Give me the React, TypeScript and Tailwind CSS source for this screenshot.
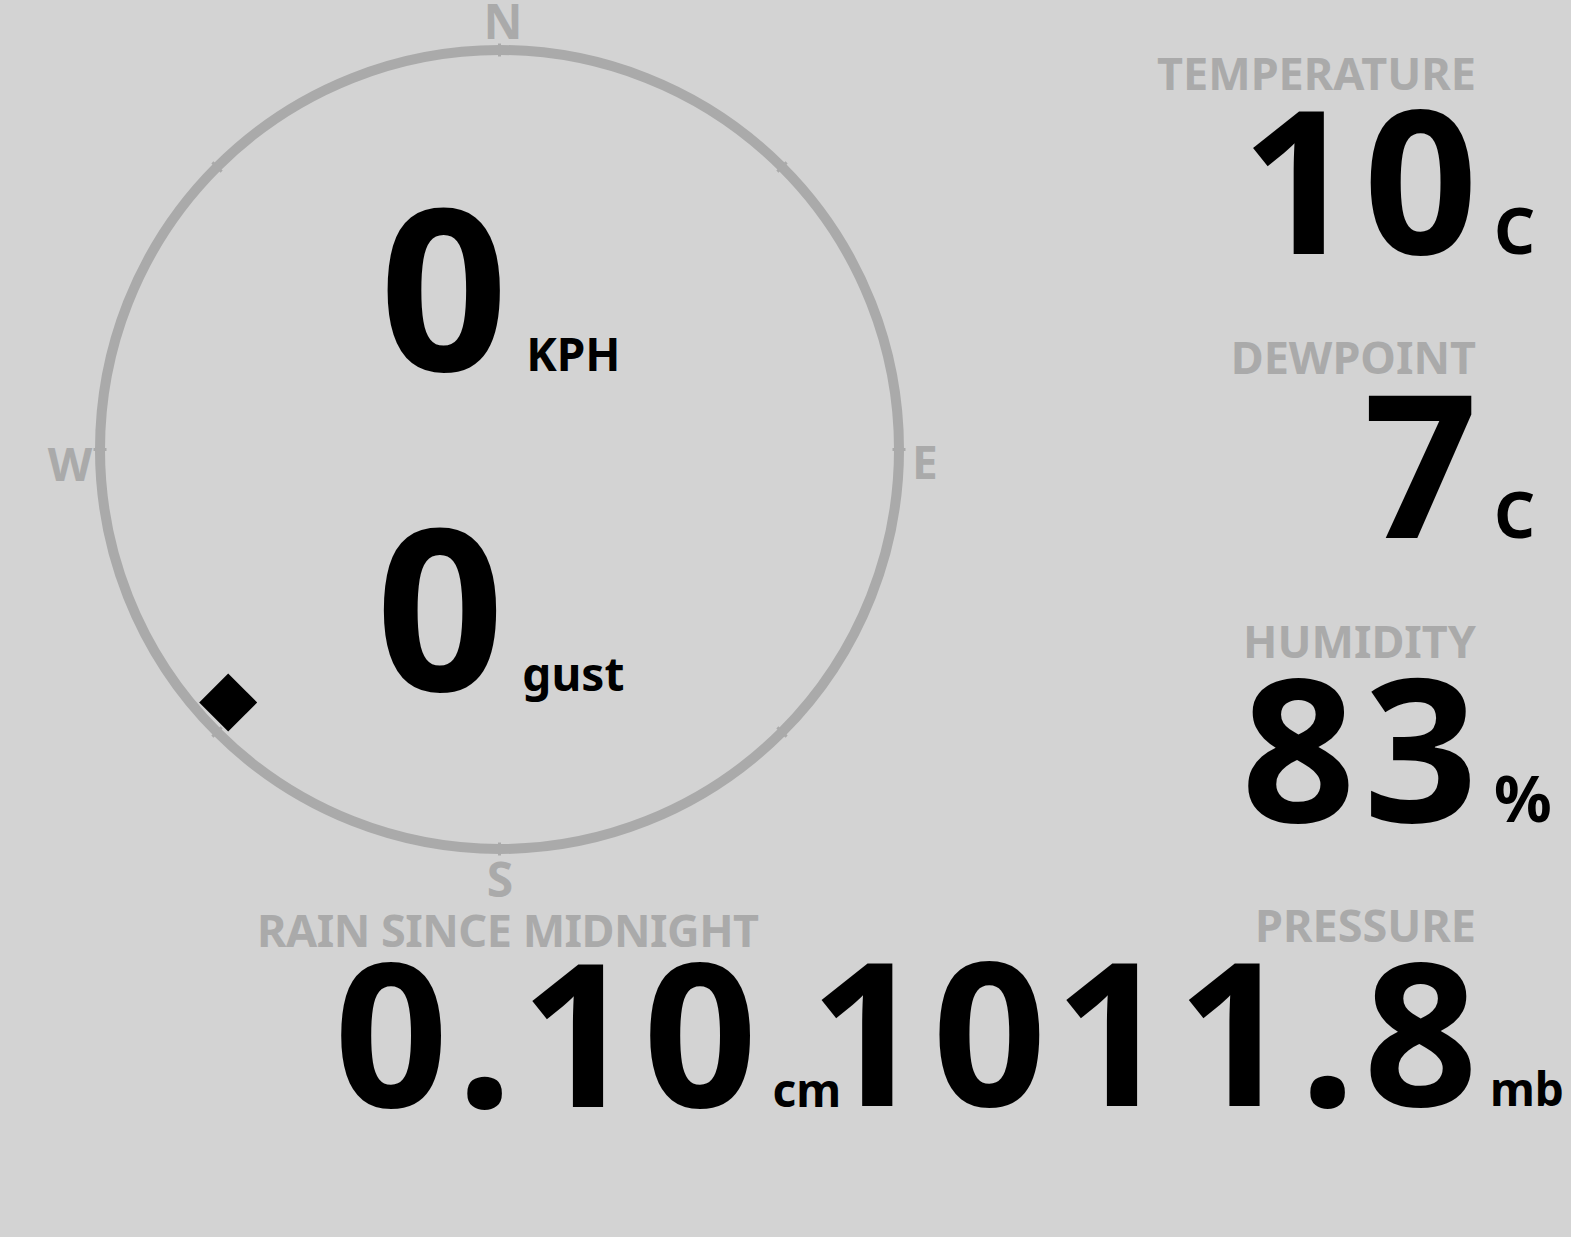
import React from "react";

const FONT = "font-['Noto_Sans','Open_Sans',sans-serif] font-bold";

const CX = 499.5;
const CY = 449.5;
const R = 399.5;

const windDirection = 227;

const stats = [
  { label: "TEMPERATURE", value: "10", unit: "C", unitClass: "text-[64px] pl-[8px]" },
  { label: "DEWPOINT", value: "7", unit: "C", unitClass: "text-[64px] pl-[8px]" },
  { label: "HUMIDITY", value: "83", unit: "%", unitClass: "text-[64px] pl-[8px]" },
];

function Compass() {
  const rad = (windDirection * Math.PI) / 180;
  const px = CX + 371 * Math.sin(rad);
  const py = CY - 371 * Math.cos(rad);

  return (
    <svg width="1000" height="902" className="absolute inset-0">
      <circle cx={CX} cy={CY} r={R} fill="none" stroke="#aaaaaa" strokeWidth="10" />
      {[0, 45, 90, 135, 180, 225, 270, 315].map((a) => {
        const t = (a * Math.PI) / 180;
        const s = Math.sin(t);
        const c = Math.cos(t);
        return (
          <line
            key={a}
            x1={CX + (R - 6.5) * s}
            y1={CY - (R - 6.5) * c}
            x2={CX + (R + 6.5) * s}
            y2={CY - (R + 6.5) * c}
            stroke="#aaaaaa"
            strokeWidth="3"
          />
        );
      })}
      <rect
        x={px - 20.5}
        y={py - 20.5}
        width="41"
        height="41"
        fill="#000"
        transform={`rotate(${windDirection - 182} ${px} ${py})`}
      />
    </svg>
  );
}

function ValueRow({
  value,
  unit,
  unitClass,
}: {
  value: string;
  unit: string;
  unitClass: string;
}) {
  return (
    <div className="flex items-baseline justify-end h-[163px] mr-[-90px]">
      <span className="text-[200px] leading-[163px] tracking-[8px] text-black">{value}</span>
      <span className={`w-[80px] leading-none text-black ${unitClass}`}>{unit}</span>
    </div>
  );
}

export default function App() {
  return (
    <div className={`w-full h-[1237px] bg-[#d3d3d3] overflow-hidden ${FONT}`}>
      <div className="flex h-[902px]">
        <div className="relative w-[1000px] h-[902px] shrink-0">
          <Compass />
          <div className="absolute left-[503px] top-[4px] -translate-x-1/2 text-[48px] leading-[34px] text-[#aaaaaa]">
            N
          </div>
          <div className="absolute left-[70px] top-[463px] -translate-x-1/2 -translate-y-1/2 text-[46px] leading-none text-[#aaaaaa]">
            W
          </div>
          <div className="absolute left-[925px] top-[461px] -translate-x-1/2 -translate-y-1/2 text-[46px] leading-none text-[#aaaaaa]">
            E
          </div>
          <div className="absolute left-[500px] top-[879px] -translate-x-1/2 -translate-y-1/2 text-[48px] leading-none text-[#aaaaaa]">
            S
          </div>

          <div className="relative flex flex-col items-center pt-[171px] gap-[95px]">
            <div className="flex items-baseline h-[225px]">
              <span className="text-[225px] leading-[225px] text-black">0</span>
              <span className="pl-[18px] text-[46px] leading-none text-black">KPH</span>
            </div>
            <div className="flex items-baseline h-[225px]">
              <span className="text-[225px] leading-[225px] text-black">0</span>
              <span className="pl-[18px] text-[46px] leading-none text-black">gust</span>
            </div>
          </div>
        </div>

        <div className="flex-1 flex flex-col items-end pr-[95px] pt-[50px] gap-[76px]">
          {stats.map((s) => (
            <div key={s.label} className="flex flex-col items-end">
              <div className="text-[45px] leading-[45px] text-[#aaaaaa]">{s.label}</div>
              <ValueRow value={s.value} unit={s.unit} unitClass={s.unitClass} />
            </div>
          ))}
        </div>
      </div>

      <div className="flex">
        <div className="w-[560px] shrink-0 ml-[257px] pt-[5px]">
          <div className="text-[45px] leading-[46px] tracking-[-0.5px] mb-[-5px] text-[#aaaaaa] whitespace-nowrap">
            RAIN SINCE MIDNIGHT
          </div>
          <div className="flex items-baseline h-[163px] ml-[77px]">
            <span className="text-[200px] leading-[163px] tracking-[8px] text-black">0.10</span>
            <span className="pl-[7px] text-[46px] leading-none text-black">cm</span>
          </div>
        </div>
        <div className="flex-1 min-w-0 flex flex-col items-end pr-[95px]">
          <div className="text-[45px] leading-[45px] text-[#aaaaaa]">PRESSURE</div>
          <ValueRow value="1011.8" unit="mb" unitClass="text-[46px] pl-[4px]" />
        </div>
      </div>
    </div>
  );
}
